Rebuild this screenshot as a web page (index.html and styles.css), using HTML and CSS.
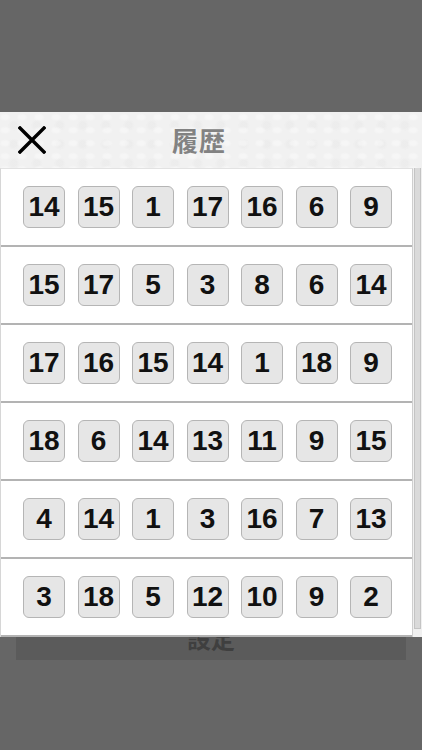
FILE: index.html
```html
<!DOCTYPE html>
<html lang="ja">
<head>
<meta charset="utf-8">
<title>履歴</title>
<link rel="stylesheet" href="styles.css">
</head>
<body>
<div class="page">
  <div class="settings-bar">設定</div>

  <div class="modal">
    <div class="modal-header">
      <button class="close-btn" aria-label="閉じる">
        <svg width="28" height="28" viewBox="0 0 28 28">
          <path d="M2 2 L26 26 M26 2 L2 26" stroke="#000" stroke-width="3.4" stroke-linecap="square" fill="none"/>
        </svg>
      </button>
      <div class="modal-title">履歴</div>
    </div>
    <div class="list-wrap">
      <div class="list">
        <div class="row"><span class="num">14</span><span class="num">15</span><span class="num">1</span><span class="num">17</span><span class="num">16</span><span class="num">6</span><span class="num">9</span></div>
        <div class="row"><span class="num">15</span><span class="num">17</span><span class="num">5</span><span class="num">3</span><span class="num">8</span><span class="num">6</span><span class="num">14</span></div>
        <div class="row"><span class="num">17</span><span class="num">16</span><span class="num">15</span><span class="num">14</span><span class="num">1</span><span class="num">18</span><span class="num">9</span></div>
        <div class="row"><span class="num">18</span><span class="num">6</span><span class="num">14</span><span class="num">13</span><span class="num">11</span><span class="num">9</span><span class="num">15</span></div>
        <div class="row"><span class="num">4</span><span class="num">14</span><span class="num">1</span><span class="num">3</span><span class="num">16</span><span class="num">7</span><span class="num">13</span></div>
        <div class="row"><span class="num">3</span><span class="num">18</span><span class="num">5</span><span class="num">12</span><span class="num">10</span><span class="num">9</span><span class="num">2</span></div>
      </div>
      <div class="scrollbar"></div>
    </div>
  </div>
</div>
</body>
</html>
```
FILE: styles.css
```css
html, body {
  margin: 0;
  padding: 0;
}
body {
  background: #666666;
  width: 422px;
  height: 750px;
  overflow: hidden;
  font-family: "Liberation Sans", "Noto Sans CJK JP", sans-serif;
}
.page {
  position: relative;
  height: 750px;
  display: flex;
  flex-direction: column;
  justify-content: flex-end;
  padding-bottom: 90px;
  box-sizing: border-box;
}
.settings-bar {
  margin: 0 16px;
  height: 44px;
  background: #5b5b5b;
  color: #3f3f3f;
  font-family: "Noto Sans CJK JP", sans-serif;
  font-weight: 700;
  font-size: 24px;
  display: flex;
  align-items: center;
  justify-content: center;
  line-height: 1;
}
.modal {
  position: absolute;
  top: 112px;
  left: 0;
  right: 0;
  background: #f0f0f0;
}
.modal-header {
  height: 56px;
  display: flex;
  align-items: center;
  padding-left: 18px;
  background-color: #f1f1f1;
  background-image:
    radial-gradient(ellipse at 30% 40%, rgba(255,255,255,0.35) 0 3px, transparent 6px),
    radial-gradient(ellipse at 60% 70%, rgba(228,228,228,0.35) 0 3px, transparent 6px);
  background-size: 17px 13px, 23px 19px;
}
.close-btn {
  border: 0;
  background: transparent;
  padding: 0;
  width: 28px;
  height: 28px;
  display: flex;
}
.modal-title {
  margin-left: 126px;
  font-family: "Noto Sans CJK JP", sans-serif;
  font-weight: 700;
  font-size: 26px;
  color: #828282;
  letter-spacing: 1px;
  line-height: 1;
}
.list-wrap {
  display: flex;
  background: #f0f0f0;
}
.list {
  width: 413px;
  background: #fff;
  border-left: 1px solid #d6d6d6;
  border-top: 1px solid #e2e2e2;
  border-right: 1px solid #cfcfcf;
}
.row {
  height: 76px;
  border-bottom: 2px solid #b3b3b3;
  display: flex;
  align-items: center;
  gap: 12.5px;
  padding-left: 22px;
}
.num {
  width: 40px;
  height: 40px;
  border: 1px solid #b5b5b5;
  border-radius: 6px;
  background: #e6e6e6;
  display: flex;
  align-items: center;
  justify-content: center;
  font-family: "Liberation Sans", Arial, sans-serif;
  font-weight: 700;
  font-size: 28px;
  color: #111;
  line-height: 1;
}
.scrollbar {
  width: 5px;
  margin: 0 1px 8px 1px;
  background: #dadada;
  border: 1px solid #c4c4c4;
  border-top: 0;
}
```
